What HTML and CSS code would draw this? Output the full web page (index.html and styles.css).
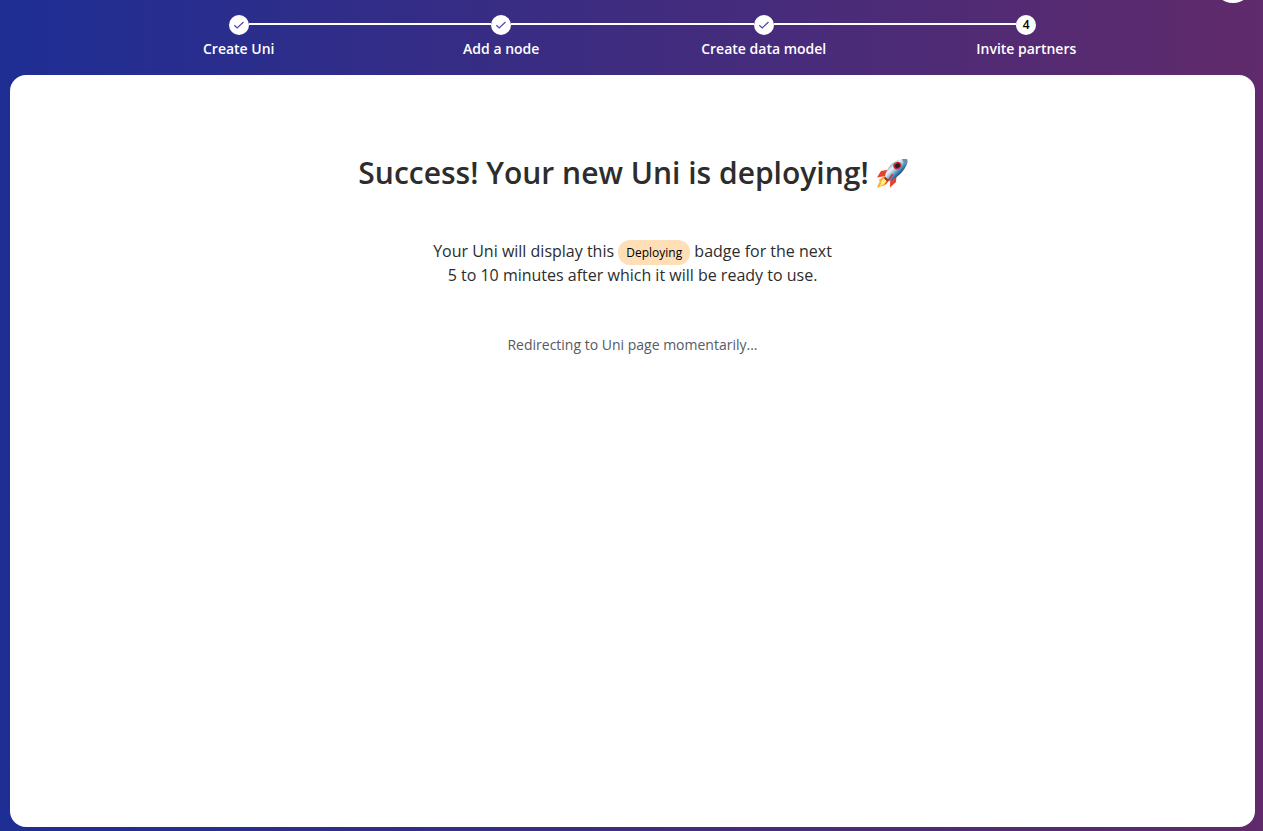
FILE: index.html
```html
<!DOCTYPE html>
<html lang="en">
<head>
<meta charset="utf-8">
<title>Deploying Uni</title>
<link rel="stylesheet" href="styles.css">
</head>
<body>
<div class="avatar"></div>
<ol class="steps">
  <li class="step"><span class="dot"><svg class="check" viewBox="0 0 12 12"><path d="M1.3 6.3 4.2 8.9 10.5 3.1"/></svg></span><span class="label">Create Uni</span></li>
  <li class="step"><span class="dot"><svg class="check" viewBox="0 0 12 12"><path d="M1.3 6.3 4.2 8.9 10.5 3.1"/></svg></span><span class="label">Add a node</span></li>
  <li class="step"><span class="dot"><svg class="check" viewBox="0 0 12 12"><path d="M1.3 6.3 4.2 8.9 10.5 3.1"/></svg></span><span class="label">Create data model</span></li>
  <li class="step"><span class="dot">4</span><span class="label">Invite partners</span></li>
</ol>
<main class="panel">
  <h1 class="title"><span>Success! Your new Uni is deploying!</span>
    <svg class="rocket" viewBox="0 0 32 32">
      <defs>
        <linearGradient id="hull" gradientUnits="userSpaceOnUse" x1="14" y1="8" x2="23" y2="17">
          <stop offset="0" stop-color="#8ba6bb"/><stop offset=".3" stop-color="#edf4f8"/><stop offset=".55" stop-color="#a2c4dc"/><stop offset=".8" stop-color="#3f8fca"/><stop offset="1" stop-color="#245b88"/>
        </linearGradient>
      </defs>
      <path d="M8 19 2.5 23.5 4 24 .8 30.8 6 29 9.5 28 13.5 23Z" fill="#ffa42b"/>
      <path d="M8 21 4.5 25 5 26.5 3 29.5 8 27 11 23Z" fill="#fff07a"/>
      <path d="M13.5 12.5 5 14 1 20.5 9.5 19Z" fill="#e9402b"/>
      <path d="M20.5 19.5 20 25 14 30.5 14.2 23.5Z" fill="#e9402b"/>
      <path d="M9 20C9.5 14 14 6.5 21.5 3.3 25 2 29.5 1.7 31.3 2.5 31.8 5 30.5 9 28 12.5 24.5 17.5 19 22 13 24Z" fill="url(#hull)"/>
      <path d="M26 2.1C28.5 1.8 30.5 2 31.3 2.5 31.6 4.5 31 6.8 30 9Z" fill="#688ba7"/>
      <path d="M9 19.5 13.2 23.5 11.5 24.8 8 21.5Z" fill="#8b3531"/>
      <path d="M16 16.5 17.3 18 10.5 26.3 8.8 27.5Z" fill="#df3020"/>
      <ellipse cx="21.3" cy="8.6" rx="4.1" ry="3.5" transform="rotate(-30 21.3 8.6)" fill="#c42831"/>
      <ellipse cx="21.5" cy="8.7" rx="2.6" ry="2.1" transform="rotate(-30 21.5 8.7)" fill="#201d2d"/>
    </svg>
  </h1>
  <p class="message">Your Uni will display this <span class="badge">Deploying</span> badge for the next<br>5 to 10 minutes after which it will be ready to use.</p>
  <p class="redirect">Redirecting to Uni page momentarily...</p>
</main>
</body>
</html>
```
FILE: styles.css
```css
* { box-sizing: border-box; }
body {
  margin: 0;
  height: 831px;
  padding: 15px 8px 4px 10px;
  display: flex;
  flex-direction: column;
  overflow: hidden;
  font-family: "Open Sans", sans-serif;
  background: linear-gradient(90deg, #1e2e94, #602a6b);
}
.avatar {
  position: absolute;
  top: -37px;
  right: 10px;
  width: 40px;
  height: 40px;
  border-radius: 50%;
  background: #fff;
}
.steps {
  list-style: none;
  margin: 0 auto;
  padding: 0;
  width: 1050px;
  height: 60px;
  display: flex;
  flex: none;
}
.step {
  flex: 1;
  display: grid;
  grid-template-columns: 1fr 20px 1fr;
  grid-template-rows: 20px 28px;
  color: #fff;
}
.step::before, .step::after {
  content: "";
  grid-row: 1;
  height: 2px;
  margin-top: 8px;
  background: #fff;
}
.step::before { grid-column: 1; }
.step::after { grid-column: 3; }
.step:first-child::before, .step:last-child::after { visibility: hidden; }
.dot {
  grid-column: 2;
  grid-row: 1;
  display: flex;
  align-items: center;
  justify-content: center;
  border-radius: 50%;
  background: #fff;
  color: #000;
  font-size: 12px;
  font-weight: 600;
  line-height: 20px;
}
.check {
  width: 12px;
  height: 12px;
  fill: none;
  stroke: #5548b8;
  stroke-width: 1.3;
}
.label {
  grid-column: 1 / 4;
  grid-row: 2;
  text-align: center;
  font-size: 14px;
  font-weight: 600;
  line-height: 28px;
}
.panel {
  flex: 1;
  border-radius: 16px;
  background: #fff;
  color: #2d2d2d;
  text-align: center;
}
.title {
  margin: 76px 0 0;
  padding-left: 1px;
  height: 44px;
  display: flex;
  align-items: center;
  justify-content: center;
  gap: 7px;
  font-size: 30px;
  font-weight: 600;
  line-height: 44px;
}
.rocket { width: 32px; height: 32px; }
.message {
  margin: 44px 0 0;
  font-size: 16px;
  line-height: 24px;
}
.badge {
  display: inline-block;
  height: 25px;
  margin: -1px 0 -2px;
  padding: 0 8px;
  border-radius: 12px;
  background: #ffdfb8;
  color: #000;
  font-size: 12px;
  line-height: 25px;
}
.redirect {
  margin: 46px 0 0;
  color: #555a64;
  font-size: 14px;
  line-height: 24px;
}
```
